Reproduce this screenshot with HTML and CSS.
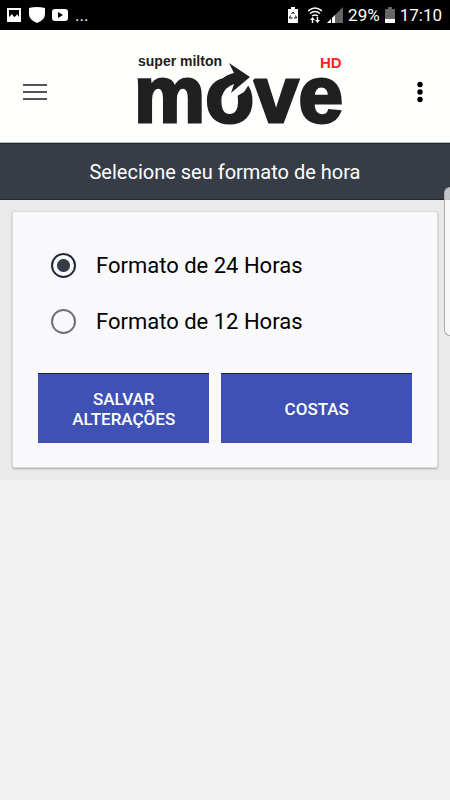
FILE: index.html
```html
<!DOCTYPE html>
<html lang="pt">
<head>
<meta charset="utf-8">
<meta name="viewport" content="width=device-width, initial-scale=1">
<title>Super Milton Move HD</title>
<link rel="stylesheet" href="styles.css">
</head>
<body>
<div class="status">
  <div class="status-group">
    <svg width="16" height="16" viewBox="0 0 16 16"><path fill="#fff" fill-rule="evenodd" d="M1 1h14v14H1zM3 3v7l3-3 2 3 2-1 1-2 2 3V3z"/></svg>
    <svg width="16" height="16" viewBox="0 0 16 16"><path fill="#fff" d="M0 1Q4 0 8 0t8 1v6q0 6-8 9Q0 13 0 7z"/></svg>
    <svg width="16" height="16" viewBox="0 0 16 16"><rect y="2" width="16" height="12" rx="3" fill="#fff"/><path d="M6 5v6l5-3z"/></svg>
    <span class="more">...</span>
  </div>
  <div class="status-group right">
    <svg width="10" height="16" viewBox="0 0 10 16"><path fill="#fff" d="M3 0h4v2h3v14H0V2h3z"/><path fill="none" stroke="#000" d="M3.500 7L5 5l1.500 2M7.500 8.500l1 2.500H6M4.500 11h-3l1-2.500"/></svg>
    <svg class="wifi" width="14" height="16" viewBox="0 0 14 16"><path fill="none" stroke="#fff" stroke-width="1.5" d="M0 4q7-6 14 0M2 6.500q5-4 10 0M4 9q3-2 6 0"/><path fill="#fff" d="M2 13l2.500-3L7 13H5.200v3H3.800v-3zM7 13h1.800v-3h1.400v3H12l-2.500 3z"/></svg>
    <svg width="16" height="16" viewBox="0 0 16 16"><path fill="#666" d="M16 0v16H0z"/><path fill="#fff" d="M8 8v8H0z"/><path stroke="#000" d="M4.500 8v8"/></svg>
    <span>29%</span>
    <svg width="10" height="16" viewBox="0 0 10 16"><path fill="#666" d="M3 0h4v2h3v14H0V2h3z"/><path fill="#fff" d="M0 12h10v4H0z"/></svg>
    <time>17:10</time>
  </div>
</div>
<header class="header">
  <button class="icon-button" aria-label="Menu"><svg width="24" height="20" viewBox="0 0 24 20"><path stroke="#555" stroke-width="2" d="M0 3h24M0 10h24M0 17h24"/></svg></button>
  <svg class="logo" width="220" height="86" viewBox="0 4 220 86" role="img" aria-label="super milton move HD">
    <text class="logo-small" x="8" y="21">super milton</text>
    <text class="logo-hd" x="190" y="23">HD</text>
    <text class="logo-main" x="4" y="77">move</text>
    <path fill="#fffffd" d="M98 27l24-3 4 8-8 9-4 6-12 7-3-8-5 3z"/>
    <path fill="#202020" d="M99 18L120 32L101 48L104 39Q95 42 92 51L83 47Q90 31 104 28z"/>
  </svg>
  <button class="icon-button end" aria-label="Mais opções"><svg width="6" height="22" viewBox="0 0 6 22"><circle cx="3" cy="3.500" r="2.700"/><circle cx="3" cy="11" r="2.700"/><circle cx="3" cy="18.500" r="2.700"/></svg></button>
</header>
<h1 class="title">Selecione seu formato de hora</h1>
<main class="content">
  <form class="card">
    <label class="option"><input type="radio" name="format" checked>Formato de 24 Horas</label>
    <label class="option"><input type="radio" name="format">Formato de 12 Horas</label>
    <div class="actions">
      <button type="button">SALVAR ALTERAÇÕES</button>
      <button type="button">COSTAS</button>
    </div>
  </form>
</main>
<div class="edge-handle"></div>
</body>
</html>
```
FILE: styles.css
```css
* {
  box-sizing: border-box;
}

body {
  position: relative;
  min-height: 100vh;
  margin: 0;
  overflow-x: hidden;
  background: #f1f1f1;
  color: #000;
  font-family: Roboto, sans-serif;
}

.status {
  display: flex;
  align-items: center;
  justify-content: space-between;
  height: 30px;
  padding: 0 8px 0 6px;
  background: #000;
  color: #fff;
  font-size: 17px;
}

.status-group {
  display: flex;
  align-items: center;
  gap: 7px;
}

.more {
  line-height: 16px;
}

.right {
  gap: 5px;
}

.wifi {
  margin-left: 5px;
}

.header {
  display: flex;
  align-items: center;
  justify-content: space-between;
  height: 113px;
  padding: 24px 15px 12px;
  background: #fffffd;
  border-bottom: 1px solid #b5b8ba;
}

.icon-button {
  display: flex;
  justify-content: center;
  width: 40px;
  padding: 8px;
  border: 0;
  background: none;
}

.end {
  width: 30px;
}

.logo {
  margin-left: 20px;
}

.logo-small,
.logo-main,
.logo-hd {
  fill: #202020;
  font-family: "Liberation Sans", sans-serif;
  font-weight: 700;
}

.logo-small {
  font-size: 14px;
}

.logo-main {
  font-size: 80px;
  stroke: #202020;
  stroke-width: 3px;
}

.logo-hd {
  fill: #f22;
  font-size: 15px;
}

.title {
  margin: 0;
  padding: 16px 15px 15px;
  background: #363d47;
  border-top: 1px solid #1d2a3a;
  border-bottom: 1px solid #1d2a3a;
  color: #fff;
  font-size: 20px;
  font-weight: 400;
  line-height: 24px;
  text-align: center;
}

.content {
  padding: 11px 12px 12px;
  background: #eaeaea;
}

.card {
  padding: 25px 25px 24px;
  background: #f9f9fc;
  border: 1px solid #dcdcdc;
  border-radius: 3px;
  box-shadow: 0 1px 2px #aaa;
}

.option {
  display: flex;
  align-items: center;
  gap: 20px;
  height: 56px;
  padding-left: 13px;
  font-size: 22px;
}

.option input {
  appearance: none;
  width: 25px;
  height: 25px;
  margin: 0;
  border: 2px solid #707072;
  border-radius: 50%;
}

.option input:checked {
  border-color: #1d2939;
  background: radial-gradient(circle, #363d47 6px, transparent 7px);
}

.actions {
  display: grid;
  grid-template-columns: 9fr 10fr;
  gap: 12px;
  margin-top: 24px;
}

.actions button {
  min-height: 70px;
  padding: 14px;
  border: 0;
  border-top: 1px solid #0d10a0;
  background: #3f51b5;
  color: #fff;
  font: 500 17px/20px Roboto, sans-serif;
}

.edge-handle {
  position: absolute;
  top: 187px;
  right: 0;
  width: 6px;
  height: 149px;
  border: 1px solid #aaa;
  border-right: 0;
  border-radius: 6px 0 0 6px;
  background: rgba(255, 255, 255, 0.7);
}
```
